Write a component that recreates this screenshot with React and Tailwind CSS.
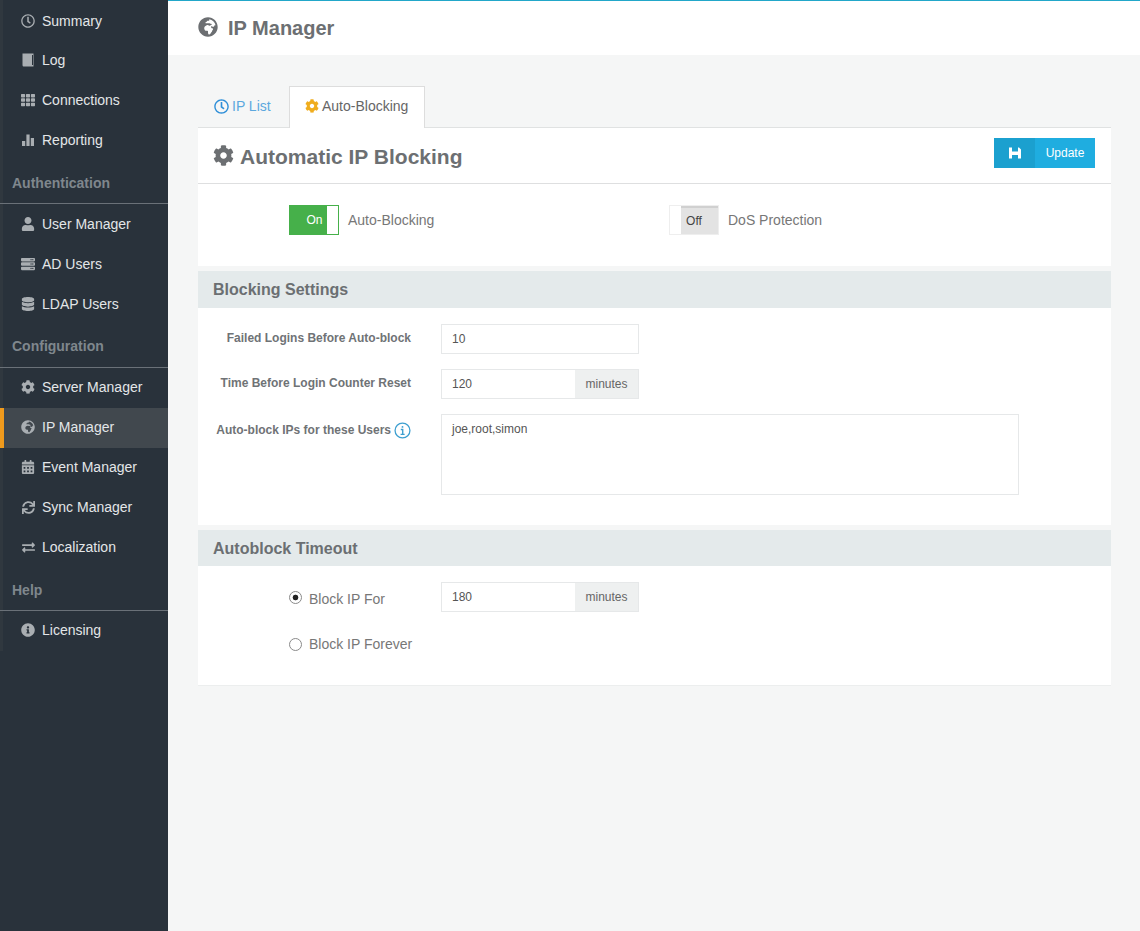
import React from "react";
import { FaRegClock, FaTh, FaUser, FaServer, FaDatabase, FaCog, FaGlobeAfrica, FaCalendarAlt, FaSync, FaExchangeAlt, FaInfoCircle } from "react-icons/fa";

const font = { fontFamily: '"Liberation Sans", Arial, sans-serif' };

function LogIcon({ size = 14 }) {
  return (
    <svg viewBox="0 0 14 14" width={size} height={size} fill="currentColor">
      <path d="M1.5 0.5H12.5V13.5H3C2 13.5 1.5 13 1.5 12Z" />
      <path d="M11 2H12V12H11Z" fill="#29323b" />
    </svg>
  );
}

function BarsIcon({ size = 14 }) {
  return (
    <svg viewBox="0 0 14 14" width={size} height={size} fill="currentColor">
      <rect x="1" y="8" width="3.2" height="5" />
      <rect x="5.4" y="1.5" width="3.2" height="11.5" />
      <rect x="9.8" y="5" width="3.2" height="8" />
    </svg>
  );
}

function FloppyIcon() {
  return (
    <svg viewBox="0 0 12 12" width="12" height="12" fill="currentColor">
      <path fillRule="evenodd" d="M0 0.5H3V4.5H9V0.5H10L12 2.5V11.5H9V8H3V11.5H0Z" />
    </svg>
  );
}

function Item({ icon: Icon, label, active, size = 14, lift }) {
  return (
    <div className={`flex h-10 items-center text-[14px] text-[#e3e6e8] ${lift ? "pb-[2px]" : ""} ${active ? "bg-[#41484e] border-l-[4px] border-[#ef9a1c] pl-[17px]" : "pl-[21px]"}`}>
      <span className="flex w-[14px] justify-center text-[#a9aeb2]"><Icon size={size} /></span>
      <span className="ml-[7px]">{label}</span>
    </div>
  );
}

function Section({ label, short, low }) {
  return (
    <div className={`flex items-center border-b border-[#6a7178] pl-3 text-[14px] font-bold text-[#7f878d] ${short ? "h-[43px]" : "h-[44px]"} ${low ? "pt-[4px]" : "pt-[2px]"}`}>{label}</div>
  );
}

function Bar({ label, thin }) {
  return (
    <div className={`flex items-center bg-[#e4eaeb] pl-[15px] text-[16px] font-bold text-[#6b6f72] ${thin ? "h-[36px] pt-[1px]" : "h-[37px]"}`}>{label}</div>
  );
}

function Field({ value, unit }) {
  return (
    <div className="flex h-[30px] w-[198px] border border-[#e6e8e9] bg-white text-[12px] font-normal text-[#555]">
      <input readOnly value={value} className="min-w-0 flex-1 bg-transparent pl-[10px] outline-none" />
      {unit && <span className="flex w-[63px] items-center justify-center bg-[#eef0f0] text-[#666]">{unit}</span>}
    </div>
  );
}

function Toggle({ on }) {
  return on ? (
    <div className="flex h-[30px] w-[50px] border border-[#46b04a] bg-white">
      <span className="flex w-[37px] items-center justify-center bg-[#46b04a] pl-[12px] text-[12px] text-white">On</span>
    </div>
  ) : (
    <div className="flex h-[30px] w-[50px] justify-end border border-[#eeeeee] bg-white">
      <span className="flex w-[37px] items-center justify-center border-t-2 border-[#d0d0d0] bg-[#e3e3e3] pr-[11px] text-[12px] text-[#444]">Off</span>
    </div>
  );
}

const radio = "m-0 size-[13px] appearance-none rounded-full border border-[#8a8a8a] bg-white checked:bg-[radial-gradient(circle,#222_0,#222_2.5px,#ffffff_3.2px)]";

export default function App() {
  return (
    <div className="flex h-[931px] w-[1140px] overflow-hidden bg-[#f5f6f6]" style={font}>
      <aside className="w-[168px] shrink-0 bg-[#29323b]">
        <div className="h-[651px] shadow-[inset_3px_0_0_#30383f]">
          <div className="-mb-[2px] pt-[2px]"><Item icon={FaRegClock} label="Summary" lift /></div>
          <Item icon={LogIcon} label="Log" />
          <Item icon={FaTh} label="Connections" />
          <Item icon={BarsIcon} label="Reporting" />
          <Section label="Authentication" low />
          <Item icon={FaUser} label="User Manager" />
          <Item icon={FaServer} label="AD Users" />
          <Item icon={FaDatabase} label="LDAP Users" />
          <Section label="Configuration" />
          <Item icon={FaCog} label="Server Manager" lift />
          <Item icon={FaGlobeAfrica} label="IP Manager" active lift />
          <Item icon={FaCalendarAlt} label="Event Manager" lift />
          <Item icon={FaSync} label="Sync Manager" size={13} lift />
          <Item icon={FaExchangeAlt} label="Localization" size={13} lift />
          <Section label="Help" short />
          <Item icon={FaInfoCircle} label="Licensing" lift />
        </div>
      </aside>
      <main className="flex-1">
        <header className="flex h-[55px] items-center border-t border-[#22a7c9] bg-white pl-[30px] text-[#6c6f72]">
          <FaGlobeAfrica size={20} className="mb-[3px]" />
          <h1 className="ml-[10px] text-[20px] font-bold">IP Manager</h1>
        </header>
        <div className="pl-[30px] pr-[29px] pt-[31px]">
          <nav className="flex h-[41px] items-stretch text-[14px]">
            <div className="flex w-[91px] items-center pb-[1px] pl-[16px] text-[#5ba8de]">
              <FaRegClock size={15} className="text-[#2f8fd8]" />
              <span className="ml-[3px]">IP List</span>
            </div>
            <div className="z-10 -mb-px flex w-[136px] items-center border border-b-0 border-[#dddddd] bg-white pb-[3px] pl-[15px] text-[#666]">
              <FaCog size={14} className="text-[#f0ad1e]" />
              <span className="ml-[3px]">Auto-Blocking</span>
            </div>
          </nav>
          <section className="border-t border-[#e0e2e2] bg-white">
            <div className="flex h-[56px] items-center justify-between border-b border-[#dedfe0] px-4">
              <h2 className="flex items-center pt-[3px] text-[21px] font-bold text-[#6c6f72]">
                <FaCog size={21} className="mb-[3px] -ml-[1px]" />
                <span className="ml-[6px]">Automatic IP Blocking</span>
              </h2>
              <button className="mb-[5px] flex h-[30px] w-[101px] items-stretch text-[12px] text-white">
                <span className="flex w-[41px] items-center justify-center bg-[#1ba0cf]"><FloppyIcon /></span>
                <span className="flex flex-1 items-center justify-center bg-[#1fade0]">Update</span>
              </button>
            </div>
            <div className="flex h-[82px] items-start pl-[91px] pt-[21px] text-[14px] text-[#777]">
              <div className="flex w-[380px] items-center"><Toggle on /><span className="ml-[9px]">Auto-Blocking</span></div>
              <div className="flex items-center"><Toggle /><span className="ml-[9px]">DoS Protection</span></div>
            </div>
            <div className="bg-[#f5f6f6] pt-[5px]"><Bar label="Blocking Settings" /></div>
            <div className="h-[217px] pt-[16px] text-[12px] font-bold text-[#6f7376]">
              <div className="flex items-center">
                <label className="w-[213px] pb-[2px] text-right">Failed Logins Before Auto-block</label>
                <div className="ml-[30px]"><Field value="10" /></div>
              </div>
              <div className="mt-[15px] flex items-center">
                <label className="w-[213px] pb-[2px] text-right">Time Before Login Counter Reset</label>
                <div className="ml-[30px]"><Field value="120" unit="minutes" /></div>
              </div>
              <div className="mt-[15px] flex items-start">
                <label className="flex w-[213px] items-center justify-end pt-[7px]">
                  Auto-block IPs for these Users
                  <svg viewBox="0 0 16 16" className="ml-[3px] size-[17px] text-[#3d9fd0]" fill="none" stroke="currentColor">
                    <circle cx="8" cy="8" r="7" strokeWidth="1.2" />
                    <path d="M6.4 7H8.2V11.6M6.2 11.6H10" strokeWidth="1.3" />
                    <circle cx="8" cy="4.6" r="0.9" fill="currentColor" stroke="none" />
                  </svg>
                </label>
                <textarea readOnly value="joe,root,simon" className="ml-[30px] h-[81px] w-[578px] resize-none border border-[#e6e8e9] px-[10px] py-[5px] text-[12px] font-normal text-[#555] outline-none" />
              </div>
            </div>
            <div className="bg-[#f5f6f6] pt-[5px]"><Bar label="Autoblock Timeout" thin /></div>
            <div className="h-[120px] border-b border-[#eceeee] pl-[91px] pt-[16px] text-[14px] text-[#777]">
              <div className="flex h-[30px] items-center">
                <label className="flex w-[152px] items-center">
                  <input type="radio" name="block" defaultChecked className={radio} />
                  <span className="ml-[7px] pt-[4px]">Block IP For</span>
                </label>
                <Field value="180" unit="minutes" />
              </div>
              <div className="mt-[17px] flex h-[30px] items-center">
                <label className="flex items-center">
                  <input type="radio" name="block" className={radio} />
                  <span className="ml-[7px]">Block IP Forever</span>
                </label>
              </div>
            </div>
          </section>
        </div>
      </main>
    </div>
  );
}
